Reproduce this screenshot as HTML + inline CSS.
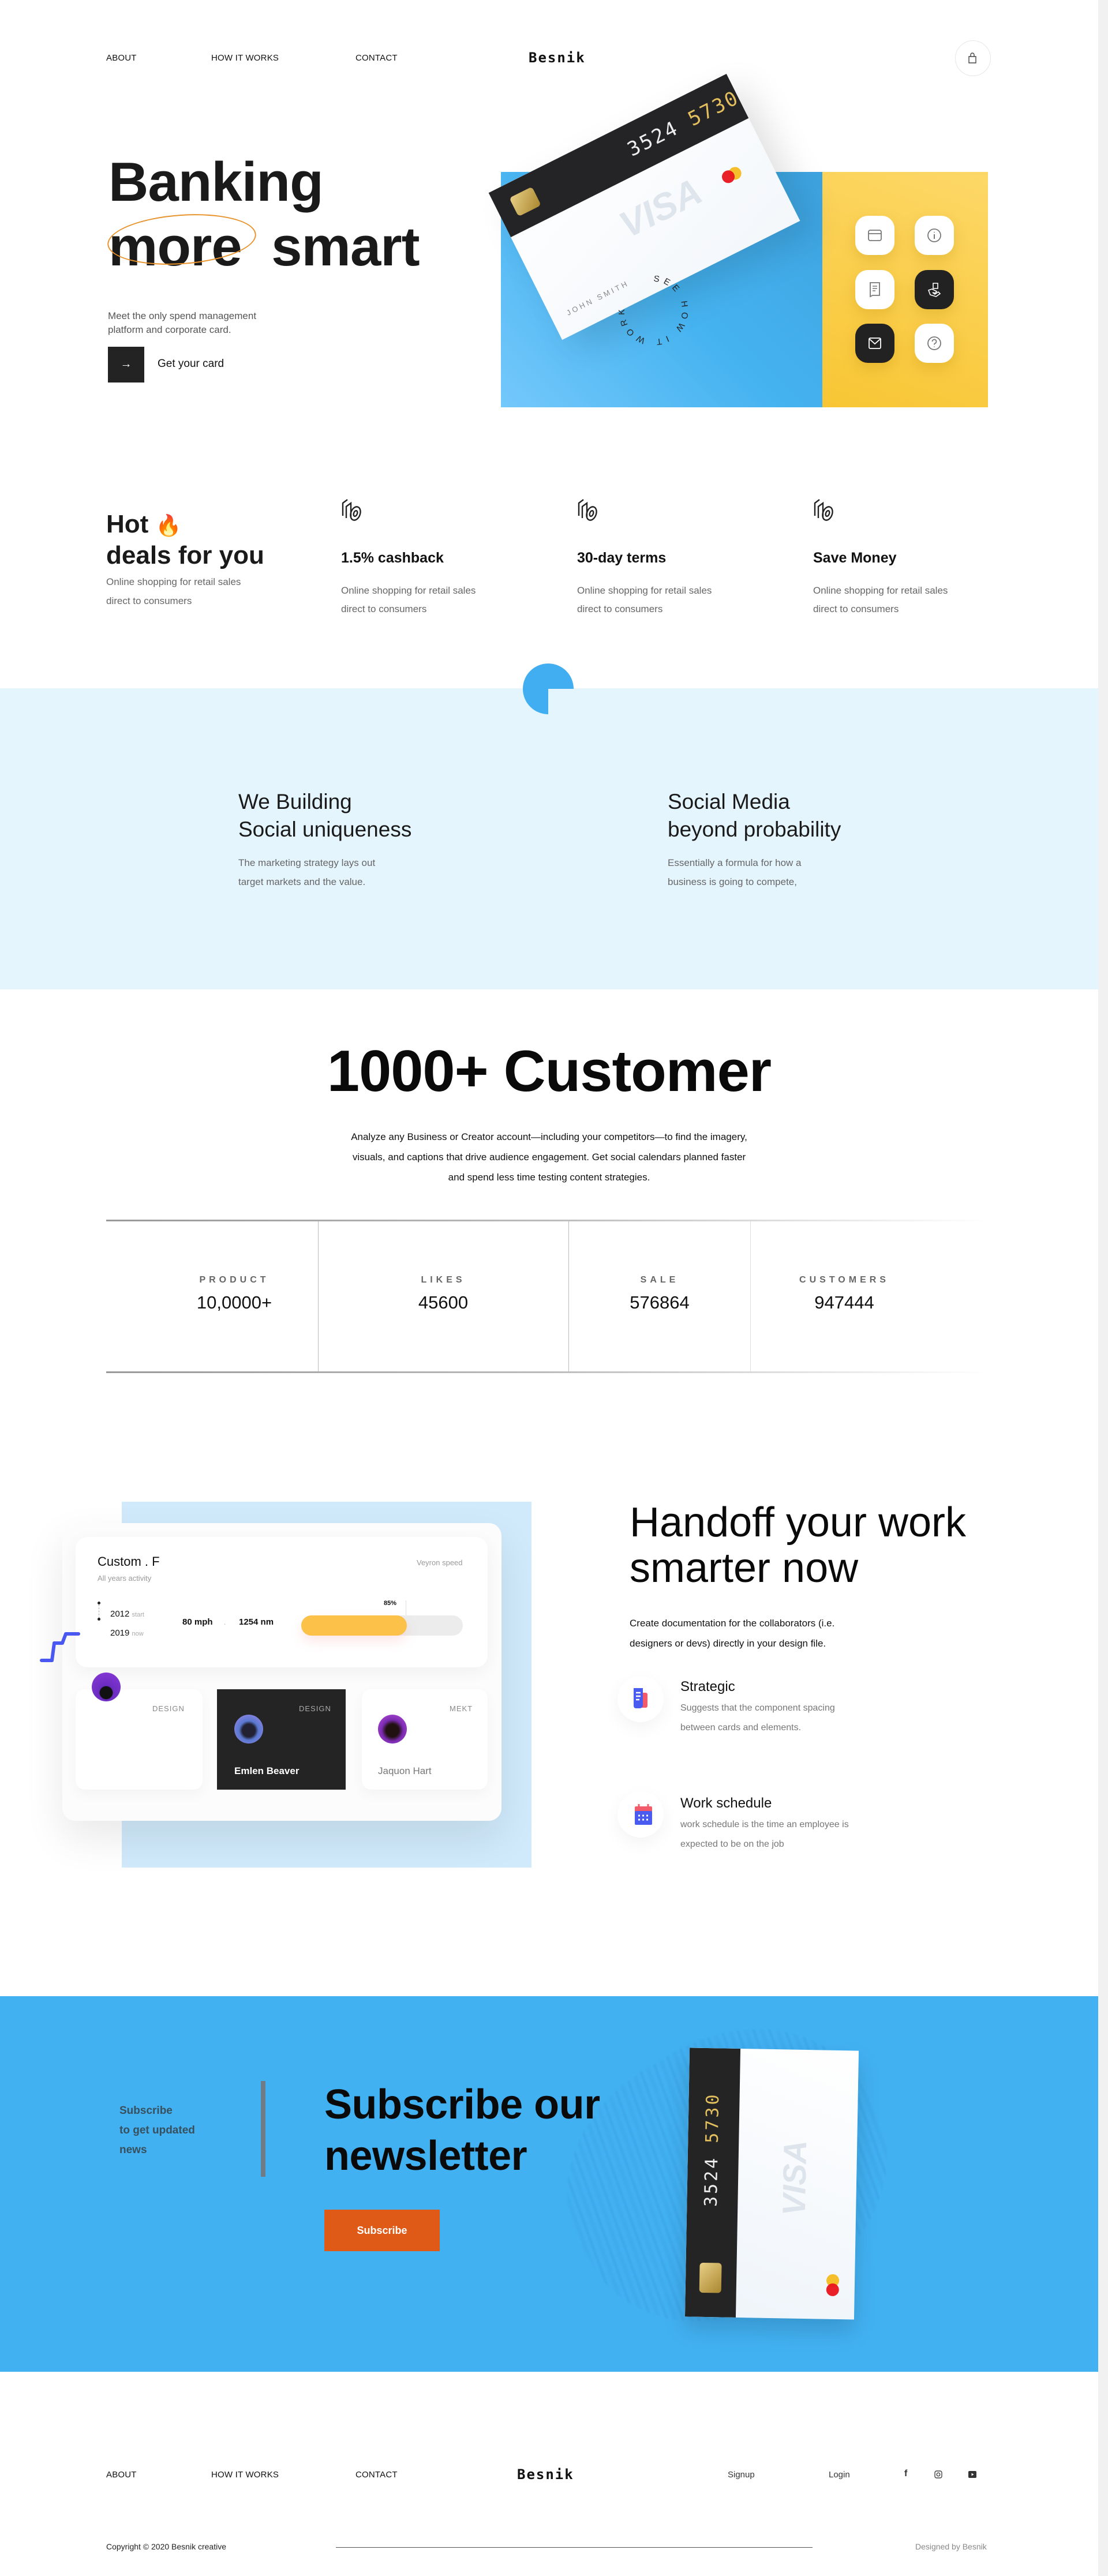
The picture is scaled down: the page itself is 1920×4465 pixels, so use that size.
<!DOCTYPE html>
<html><head><meta charset="utf-8">
<style>
*{margin:0;padding:0;box-sizing:border-box}
body{width:1920px;height:4465px;position:relative;background:#fff;font-family:"Liberation Sans",Arial,sans-serif;color:#111;overflow:hidden}
.a{position:absolute;white-space:nowrap}
.nav{font-size:15px;font-weight:500;letter-spacing:0.2px;color:#111}
.logo{font-size:24px;font-weight:700;letter-spacing:2px;font-family:"DejaVu Sans Mono","Liberation Mono",monospace}
.g{color:#6b6b6b}
.tile{position:absolute;width:68px;height:68px;border-radius:22px;background:#fff;box-shadow:0 10px 24px rgba(180,130,0,.25);display:flex;align-items:center;justify-content:center}
.tile.d{background:#222}
.lbl{font-size:16px;letter-spacing:6px;color:#666;font-weight:700;text-align:center}
.num{font-size:31px;color:#111;text-align:center}
.sb{position:absolute;right:0;top:0;width:17px;height:4465px;background:#f1f1f1}
</style></head><body>

<!-- NAV -->
<div class="a nav" style="left:184px;top:92px">ABOUT</div>
<div class="a nav" style="left:366px;top:92px">HOW IT WORKS</div>
<div class="a nav" style="left:616px;top:92px">CONTACT</div>
<div class="a logo" style="left:916px;top:86px">Besnik</div>
<div class="a" style="left:1655px;top:70px;width:62px;height:62px;border-radius:50%;border:1px solid #e6e6e6"></div>
<svg class="a" style="left:1677px;top:91px" width="16" height="20" viewBox="0 0 16 20"><path d="M2 7h12v11H2z M5 7V4a3 3 0 0 1 6 0v3" fill="none" stroke="#444" stroke-width="1.4"/></svg>

<!-- HERO -->
<div class="a" style="left:188px;top:268px;font-size:96px;font-weight:700;line-height:1;letter-spacing:-1px;color:#1a1a1a">Banking</div>
<div class="a" style="left:188px;top:380px;font-size:96px;font-weight:700;line-height:1;letter-spacing:-1px;color:#1a1a1a">more&nbsp; smart</div>
<div class="a" style="left:186px;top:372px;width:258px;height:86px;border:2px solid #e8932c;border-radius:50%;transform:rotate(-4deg)"></div>
<div class="a g" style="left:187px;top:536px;font-size:17px;line-height:24px;color:#555">Meet the only spend management<br>platform and corporate card.</div>
<div class="a" style="left:187px;top:601px;width:63px;height:62px;background:#232323;color:#fff;font-size:20px;text-align:center;line-height:60px">&#8594;</div>
<div class="a" style="left:273px;top:620px;font-size:19px;color:#111">Get your card</div>

<div class="a" style="left:868px;top:298px;width:557px;height:408px;background:linear-gradient(225deg,#3da3e0,#45b3f0 50%,#74c8fb)"></div>
<div class="a" style="left:1425px;top:298px;width:287px;height:408px;background:linear-gradient(200deg,#fdd867,#f8c634)"></div>
<div class="tile" style="left:1482px;top:374px"><svg width="26" height="22" viewBox="0 0 26 22"><rect x="2" y="2" width="22" height="18" rx="3" fill="none" stroke="#777" stroke-width="1.8"/><path d="M2 8h22" stroke="#777" stroke-width="1.8"/></svg></div>
<div class="tile" style="left:1585px;top:374px"><svg width="28" height="28" viewBox="0 0 28 28"><circle cx="14" cy="14" r="11" fill="none" stroke="#777" stroke-width="1.8"/><path d="M14 12v8M14 8v1" stroke="#777" stroke-width="2"/></svg></div>
<div class="tile" style="left:1482px;top:468px"><svg width="22" height="28" viewBox="0 0 22 28"><path d="M3 2h16v22H7l-4 2z" fill="none" stroke="#777" stroke-width="1.8"/><path d="M7 8h8M7 12h8M7 16h5" stroke="#777" stroke-width="1.6"/></svg></div>
<div class="tile d" style="left:1585px;top:468px"><svg width="28" height="28" viewBox="0 0 28 28"><path d="M12 3h8v9h-8z M4 15l6-2 8 4-2 3-5-1 4 3 6-4 3 3-7 5-10-3z" fill="none" stroke="#fff" stroke-width="1.6"/></svg></div>
<div class="tile d" style="left:1482px;top:561px"><svg width="24" height="22" viewBox="0 0 24 22"><rect x="2" y="2" width="20" height="18" rx="2" fill="none" stroke="#fff" stroke-width="1.8"/><path d="M2 3l10 9 10-9" fill="none" stroke="#fff" stroke-width="1.8"/></svg></div>
<div class="tile" style="left:1585px;top:561px"><svg width="28" height="28" viewBox="0 0 28 28"><circle cx="14" cy="14" r="11" fill="none" stroke="#777" stroke-width="1.8"/><path d="M10.5 11a3.5 3.5 0 1 1 4.5 3.3c-1 .4-1 1.2-1 2.2M14 19.5v1" fill="none" stroke="#777" stroke-width="1.8"/></svg></div>

<!-- hero card -->
<div class="a" style="left:886px;top:216px;width:461px;height:285px;transform:rotate(-26.6deg);background:linear-gradient(160deg,#fff,#f3f7fb);box-shadow:20px 30px 60px rgba(0,0,0,.12);overflow:hidden">
  <div style="position:absolute;left:0;top:0;width:461px;height:86px;background:#242426"></div>
  <div style="position:absolute;left:28px;top:24px;width:44px;height:36px;border-radius:6px;background:linear-gradient(135deg,#e8cf86,#a9872f)"></div>
  <div style="position:absolute;left:250px;top:24px;font-size:34px;letter-spacing:3px;color:#eee;font-family:'DejaVu Sans Mono',monospace">3524 <span style="color:#e3bf5e">5730</span></div>
  <div style="position:absolute;left:180px;top:120px;font-size:64px;font-weight:700;font-style:italic;color:#dfe5ec">VISA</div>
  <div style="position:absolute;left:386px;top:150px;width:22px;height:22px;border-radius:50%;background:#f5bf2b"></div>
  <div style="position:absolute;left:373px;top:150px;width:22px;height:22px;border-radius:50%;background:#e8141c;opacity:.95"></div>
  <div style="position:absolute;left:28px;top:240px;font-size:13px;letter-spacing:4px;color:#888">JOHN SMITH</div>
</div>
<svg class="a" style="left:1072px;top:478px" width="120" height="120" viewBox="0 0 120 120"><defs><path id="c" d="M60 60 m0 -50 a50 50 0 1 1 -0.1 0"/></defs><text font-size="15" letter-spacing="7" fill="#222" font-family="Liberation Sans"><textPath href="#c">SEE HOW IT WORK</textPath></text></svg>

<!-- DEALS -->
<div class="a" style="left:184px;top:884px;font-size:44px;font-weight:700;color:#1a1a1a">Hot <span style="color:#f08a24;font-size:36px">&#128293;</span></div>
<div class="a" style="left:184px;top:938px;font-size:44px;font-weight:700;color:#1a1a1a">deals for you</div>
<div class="a" style="left:184px;top:992px;font-size:17px;line-height:33px;color:#666">Online shopping for retail sales<br>direct to consumers</div>

<svg class="a" style="left:590px;top:864px" width="44" height="44" viewBox="0 0 44 44"><g fill="none" stroke="#222" stroke-width="2.4"><path d="M4 30V8l8-6"/><path d="M10 34V14l8-6v24"/><ellipse cx="26" cy="26" rx="8" ry="12" transform="rotate(20 26 26)"/><ellipse cx="26" cy="26" rx="3" ry="5" transform="rotate(20 26 26)"/></g></svg>
<svg class="a" style="left:999px;top:864px" width="44" height="44" viewBox="0 0 44 44"><g fill="none" stroke="#222" stroke-width="2.4"><path d="M4 30V8l8-6"/><path d="M10 34V14l8-6v24"/><ellipse cx="26" cy="26" rx="8" ry="12" transform="rotate(20 26 26)"/><ellipse cx="26" cy="26" rx="3" ry="5" transform="rotate(20 26 26)"/></g></svg>
<svg class="a" style="left:1408px;top:864px" width="44" height="44" viewBox="0 0 44 44"><g fill="none" stroke="#222" stroke-width="2.4"><path d="M4 30V8l8-6"/><path d="M10 34V14l8-6v24"/><ellipse cx="26" cy="26" rx="8" ry="12" transform="rotate(20 26 26)"/><ellipse cx="26" cy="26" rx="3" ry="5" transform="rotate(20 26 26)"/></g></svg>
<div class="a" style="left:591px;top:953px;font-size:25px;font-weight:700">1.5% cashback</div>
<div class="a" style="left:1000px;top:953px;font-size:25px;font-weight:700">30-day terms</div>
<div class="a" style="left:1409px;top:953px;font-size:25px;font-weight:700">Save Money</div>
<div class="a" style="left:591px;top:1008px;font-size:17px;line-height:32px;color:#666">Online shopping for retail sales<br>direct to consumers</div>
<div class="a" style="left:1000px;top:1008px;font-size:17px;line-height:32px;color:#666">Online shopping for retail sales<br>direct to consumers</div>
<div class="a" style="left:1409px;top:1008px;font-size:17px;line-height:32px;color:#666">Online shopping for retail sales<br>direct to consumers</div>

<!-- LIGHT BLUE -->
<div class="a" style="left:0;top:1193px;width:1903px;height:522px;background:#e4f5fd"></div>
<svg class="a" style="left:906px;top:1150px" width="88" height="88" viewBox="0 0 88 88"><path d="M44 44H88A44 44 0 1 0 44 88Z" fill="#42aef2"/></svg>
<div class="a" style="left:413px;top:1366px;font-size:37px;line-height:48px;color:#1a1a1a">We Building<br>Social uniqueness</div>
<div class="a" style="left:1157px;top:1366px;font-size:37px;line-height:48px;color:#1a1a1a">Social Media<br>beyond probability</div>
<div class="a" style="left:413px;top:1479px;font-size:17px;line-height:33px;color:#666">The marketing strategy lays out<br>target markets and the value.</div>
<div class="a" style="left:1157px;top:1479px;font-size:17px;line-height:33px;color:#666">Essentially a formula for how a<br>business is going to compete,</div>

<!-- CUSTOMERS -->
<div class="a" style="left:0;width:1903px;top:1800px;text-align:center;font-size:101px;font-weight:700;letter-spacing:-1px;color:#0a0a0a">1000+ Customer</div>
<div class="a" style="left:0;width:1903px;top:1953px;text-align:center;font-size:17px;line-height:35px;color:#111">Analyze any Business or Creator account—including your competitors—to find the imagery,<br>visuals, and captions that drive audience engagement. Get social calendars planned faster<br>and spend less time testing content strategies.</div>
<div class="a" style="left:184px;top:2114px;width:1530px;height:3px;background:linear-gradient(90deg,#999,#bbb 50%,rgba(220,220,220,0))"></div>
<div class="a" style="left:184px;top:2377px;width:1530px;height:3px;background:linear-gradient(90deg,#999,#bbb 50%,rgba(220,220,220,0))"></div>
<div class="a" style="left:551px;top:2117px;width:1px;height:260px;background:#bbb"></div>
<div class="a" style="left:985px;top:2117px;width:1px;height:260px;background:#bbb"></div>
<div class="a" style="left:1300px;top:2117px;width:1px;height:260px;background:#ddd"></div>
<div class="a lbl" style="left:306px;width:200px;top:2210px">PRODUCT</div>
<div class="a num" style="left:306px;width:200px;top:2240px">10,0000+</div>
<div class="a lbl" style="left:668px;width:200px;top:2210px">LIKES</div>
<div class="a num" style="left:668px;width:200px;top:2240px">45600</div>
<div class="a lbl" style="left:1043px;width:200px;top:2210px">SALE</div>
<div class="a num" style="left:1043px;width:200px;top:2240px">576864</div>
<div class="a lbl" style="left:1363px;width:200px;top:2210px">CUSTOMERS</div>
<div class="a num" style="left:1363px;width:200px;top:2240px">947444</div>

<!-- HANDOFF -->
<div class="a" style="left:211px;top:2603px;width:710px;height:634px;background:#d0eafb"></div>
<div class="a" style="left:108px;top:2640px;width:761px;height:516px;border-radius:22px;background:#fcfcfc;box-shadow:0 30px 70px rgba(0,0,0,.09)"></div>
<div class="a" style="left:131px;top:2664px;width:714px;height:226px;border-radius:20px;background:#fff;box-shadow:0 8px 30px rgba(0,0,0,.05)"></div>
<div class="a" style="left:169px;top:2694px;font-size:22px;font-weight:500">Custom . F</div>
<div class="a" style="left:169px;top:2728px;font-size:13px;color:#999">All years activity</div>
<div class="a" style="left:722px;top:2701px;font-size:13px;color:#999">Veyron speed</div>
<div class="a" style="left:169px;top:2776px;width:5px;height:5px;border-radius:50%;background:#222"></div>
<div class="a" style="left:171px;top:2781px;width:1px;height:24px;border-left:1px dashed #aaa"></div>
<div class="a" style="left:169px;top:2804px;width:5px;height:5px;border-radius:50%;background:#222"></div>
<div class="a" style="left:191px;top:2789px;font-size:15px">2012 <span style="font-size:11px;color:#aaa">start</span></div>
<div class="a" style="left:191px;top:2822px;font-size:15px">2019 <span style="font-size:11px;color:#aaa">now</span></div>
<div class="a" style="left:316px;top:2803px;font-size:15px;font-weight:700">80 mph</div>
<div class="a" style="left:388px;top:2805px;font-size:12px;color:#aaa">.</div>
<div class="a" style="left:414px;top:2803px;font-size:15px;font-weight:700">1254 nm</div>
<div class="a" style="left:522px;top:2800px;width:280px;height:35px;border-radius:18px;background:#ececec"></div>
<div class="a" style="left:522px;top:2800px;width:183px;height:35px;border-radius:18px;background:#fcc148;box-shadow:0 10px 20px rgba(250,120,120,.18)"></div>
<div class="a" style="left:665px;top:2773px;font-size:11px;font-weight:700">85%</div>
<div class="a" style="left:703px;top:2774px;width:1px;height:26px;background:#ddd"></div>
<svg class="a" style="left:66px;top:2826px" width="80" height="60" viewBox="0 0 80 60"><path d="M6 52h18l4-30h14l6-16h22" fill="none" stroke="#4958f0" stroke-width="6" stroke-linejoin="round" stroke-linecap="round"/></svg>
<div class="a" style="left:131px;top:2928px;width:220px;height:174px;border-radius:16px;background:#fff;box-shadow:0 8px 24px rgba(0,0,0,.04)"></div>
<div class="a" style="left:376px;top:2928px;width:223px;height:174px;background:#242424"></div>
<div class="a" style="left:627px;top:2928px;width:218px;height:174px;border-radius:16px;background:#fff;box-shadow:0 8px 24px rgba(0,0,0,.04)"></div>
<div class="a" style="left:159px;top:2899px;width:50px;height:50px;border-radius:50%;background:radial-gradient(circle at 50% 70%,#111 25%,#6b2bc0 28%,#8a3bd8)"></div>
<div class="a" style="left:264px;top:2954px;font-size:13px;letter-spacing:1px;color:#888">DESIGN</div>
<div class="a" style="left:518px;top:2954px;font-size:13px;letter-spacing:1px;color:#aaa">DESIGN</div>
<div class="a" style="left:779px;top:2954px;font-size:13px;letter-spacing:1px;color:#888">MEKT</div>
<div class="a" style="left:406px;top:2972px;width:50px;height:50px;border-radius:50%;background:radial-gradient(circle at 50% 55%,#223 30%,#5a78d0 45%,#a08ae8)"></div>
<div class="a" style="left:655px;top:2972px;width:50px;height:50px;border-radius:50%;background:radial-gradient(circle at 50% 55%,#211 30%,#7a2bb0 50%,#c050e0)"></div>
<div class="a" style="left:406px;top:3060px;font-size:17px;font-weight:700;color:#fff">Emlen Beaver</div>
<div class="a" style="left:655px;top:3060px;font-size:17px;font-weight:500;color:#777">Jaquon Hart</div>

<div class="a" style="left:1091px;top:2600px;font-size:72px;line-height:79px;color:#0a0a0a">Handoff your work<br>smarter now</div>
<div class="a" style="left:1091px;top:2796px;font-size:17px;line-height:35px;color:#111">Create documentation for the collaborators (i.e.<br>designers or devs) directly in your design file.</div>
<div class="a" style="left:1070px;top:2905px;width:80px;height:80px;border-radius:50%;background:#fff;box-shadow:0 10px 30px rgba(0,0,0,.05)"></div>
<svg class="a" style="left:1096px;top:2924px" width="40" height="38" viewBox="0 0 40 38"><rect x="14" y="10" width="12" height="26" rx="3" fill="#f25b6a"/><path d="M2 2h16v30a5 5 0 0 1-5 5H6a4 4 0 0 1-4-4z" fill="#4a5cf0"/><path d="M6 10h8M6 16h8M6 22h6" stroke="#fff" stroke-width="2.4"/></svg>
<div class="a" style="left:1179px;top:2910px;font-size:24px;font-weight:500">Strategic</div>
<div class="a" style="left:1179px;top:2944px;font-size:16px;line-height:34px;color:#777">Suggests that the component spacing<br>between cards and elements.</div>
<div class="a" style="left:1070px;top:3105px;width:80px;height:80px;border-radius:50%;background:#fff;box-shadow:0 10px 30px rgba(0,0,0,.05)"></div>
<svg class="a" style="left:1098px;top:3126px" width="34" height="38" viewBox="0 0 34 38"><rect x="2" y="5" width="30" height="10" rx="2" fill="#f25b6a"/><rect x="2" y="13" width="30" height="24" rx="2" fill="#4a5cf0"/><path d="M9 1v8M25 1v8" stroke="#f25b6a" stroke-width="3"/><path d="M8 21h3M15 21h3M22 21h3M8 28h3M15 28h3M22 28h3" stroke="#fff" stroke-width="3"/></svg>
<div class="a" style="left:1179px;top:3112px;font-size:24px;font-weight:500">Work schedule</div>
<div class="a" style="left:1179px;top:3146px;font-size:16px;line-height:34px;color:#777">work schedule is the time an employee is<br>expected to be on the job</div>

<!-- SUBSCRIBE -->
<div class="a" style="left:0;top:3460px;width:1903px;height:651px;background:#42b1f2;overflow:hidden">
  <div style="position:absolute;left:980px;top:80px;width:560px;height:460px;background:repeating-linear-gradient(100deg,rgba(50,150,220,.28) 0 5px,rgba(66,177,242,0) 5px 12px,rgba(50,150,220,.18) 12px 20px,rgba(66,177,242,0) 20px 26px);transform:rotate(-30deg);border-radius:45%;filter:blur(1px)"></div>
</div>
<div class="a" style="left:452px;top:3607px;width:8px;height:166px;background:#6d7c87"></div>
<div class="a" style="left:207px;top:3642px;font-size:19px;line-height:34px;font-weight:700;color:#38505e">Subscribe<br>to get updated<br>news</div>
<div class="a" style="left:562px;top:3604px;font-size:72px;line-height:89px;font-weight:700;color:#0a0a0a;letter-spacing:-0.5px">Subscribe our<br>newsletter</div>
<div class="a" style="left:562px;top:3830px;width:200px;height:72px;background:#e05a17;color:#fff;font-size:18px;font-weight:700;text-align:center;line-height:72px">Subscribe</div>
<div class="a" style="left:1191px;top:3552px;width:293px;height:466px;transform:rotate(1deg);background:linear-gradient(200deg,#fff,#eef4fa);box-shadow:0 20px 40px rgba(0,0,0,.15);overflow:hidden">
  <div style="position:absolute;left:0;top:0;width:88px;height:466px;background:#242424"></div>
  <div style="position:absolute;left:24px;top:372px;width:38px;height:52px;border-radius:6px;background:linear-gradient(135deg,#e8cf86,#a9872f)"></div>
  <div style="position:absolute;left:-58px;top:158px;width:200px;transform:rotate(-90deg);font-size:30px;letter-spacing:4px;color:#eee;font-family:'DejaVu Sans Mono',monospace;text-align:center">3524 <span style="color:#e3bf5e">5730</span></div>
  <div style="position:absolute;left:120px;top:190px;transform:rotate(-90deg);font-size:56px;font-weight:700;font-style:italic;color:#dde4ec">VISA</div>
  <div style="position:absolute;left:244px;top:388px;width:22px;height:22px;border-radius:50%;background:#f5bf2b"></div>
  <div style="position:absolute;left:244px;top:404px;width:22px;height:22px;border-radius:50%;background:#e8141c;opacity:.95"></div>
</div>

<!-- FOOTER -->
<div class="a nav" style="left:184px;top:4281px">ABOUT</div>
<div class="a nav" style="left:366px;top:4281px">HOW IT WORKS</div>
<div class="a nav" style="left:616px;top:4281px">CONTACT</div>
<div class="a logo" style="left:896px;top:4275px">Besnik</div>
<div class="a" style="left:1261px;top:4281px;font-size:15px;font-weight:500;color:#333">Signup</div>
<div class="a" style="left:1436px;top:4281px;font-size:15px;font-weight:500;color:#333">Login</div>
<div class="a" style="left:1567px;top:4279px;font-size:16px;font-weight:700;color:#333">f</div>
<svg class="a" style="left:1619px;top:4282px" width="14" height="14" viewBox="0 0 14 14"><rect x="1" y="1" width="12" height="12" rx="3" fill="none" stroke="#444" stroke-width="1.4"/><circle cx="7" cy="7" r="2.8" fill="none" stroke="#444" stroke-width="1.4"/></svg>
<svg class="a" style="left:1678px;top:4283px" width="14" height="12" viewBox="0 0 14 12"><rect width="14" height="12" rx="2" fill="#333"/><path d="M5.5 3.5v5l4-2.5z" fill="#fff"/></svg>
<div class="a" style="left:184px;top:4406px;font-size:14px;color:#222">Copyright © 2020 Besnik creative</div>
<div class="a" style="left:582px;top:4415px;width:826px;height:1px;background:#555"></div>
<div class="a" style="left:1586px;top:4406px;font-size:14px;color:#888">Designed by Besnik</div>

<div class="sb"></div>
</body></html>
